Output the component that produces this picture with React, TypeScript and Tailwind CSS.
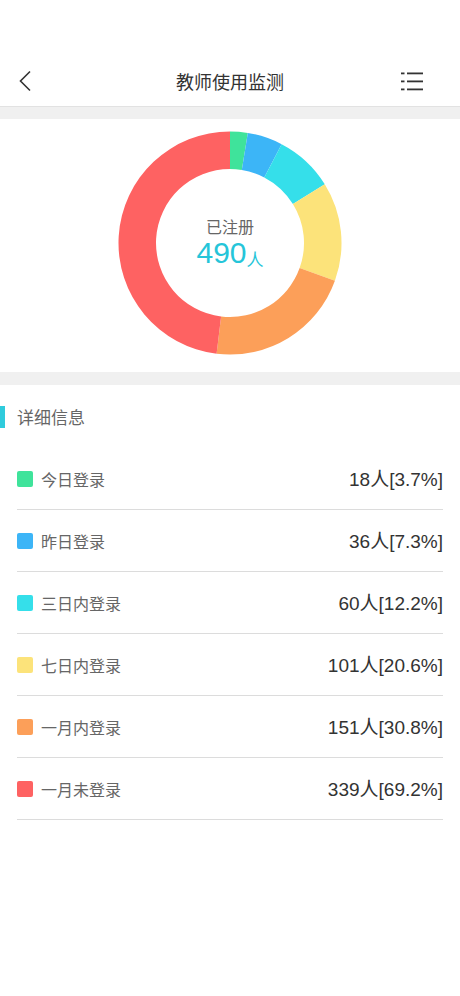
import React from "react";

const items = [
  { label: "今日登录", count: 18, pct: "3.7%", color: "#3fe39b" },
  { label: "昨日登录", count: 36, pct: "7.3%", color: "#3cb5f7" },
  { label: "三日内登录", count: 60, pct: "12.2%", color: "#35dfea" },
  { label: "七日内登录", count: 101, pct: "20.6%", color: "#fce37a" },
  { label: "一月内登录", count: 151, pct: "30.8%", color: "#fc9f59" },
  { label: "一月未登录", count: 339, pct: "69.2%", color: "#fe6262" },
];

const num = '"Liberation Sans", "Noto Sans CJK SC", sans-serif';

function arc(cx: number, cy: number, r: number, r0: number, a0: number, a1: number) {
  const p = (rad: number, a: number) => [cx + rad * Math.sin(a), cy - rad * Math.cos(a)];
  const large = a1 - a0 > Math.PI ? 1 : 0;
  const [x1, y1] = p(r, a0);
  const [x2, y2] = p(r, a1);
  const [x3, y3] = p(r0, a1);
  const [x4, y4] = p(r0, a0);
  return `M${x1} ${y1} A${r} ${r} 0 ${large} 1 ${x2} ${y2} L${x3} ${y3} A${r0} ${r0} 0 ${large} 0 ${x4} ${y4} Z`;
}

function Donut() {
  const total = items.reduce((s, i) => s + i.count, 0);
  let acc = 0;
  return (
    <svg width="226" height="226" viewBox="0 0 226 226">
      {items.map((i) => {
        const a0 = (acc / total) * Math.PI * 2;
        acc += i.count;
        const a1 = (acc / total) * Math.PI * 2;
        return <path key={i.label} d={arc(113, 113, 111.5, 74, a0, a1)} fill={i.color} />;
      })}
    </svg>
  );
}

export default function App() {
  return (
    <div className="w-[460px] min-h-[996px] bg-white" style={{ fontFamily: '"Noto Sans CJK SC", "Noto Sans", sans-serif' }}>
      <div className="h-[56px]" />
      <div className="h-[51px] border-b border-[#e2e2e2] grid grid-cols-[80px_1fr_80px] items-center">
        <div className="pl-[19px]">
          <svg width="14" height="22" viewBox="0 0 14 22" fill="none" stroke="#333" strokeWidth="1.6">
            <path d="M11 1.5 L1.5 11 L11 20.5" />
          </svg>
        </div>
        <div className="text-[18px] text-[#333] text-center">教师使用监测</div>
        <div className="flex justify-end pr-[37px]">
          <svg width="22" height="20" viewBox="0 0 22 20" fill="#333">
            <rect x="0" y="1.5" width="3.5" height="1.8" />
            <rect x="6" y="1.5" width="16" height="1.8" />
            <rect x="0" y="9.5" width="3.5" height="1.8" />
            <rect x="6" y="9.5" width="16" height="1.8" />
            <rect x="0" y="17.5" width="3.5" height="1.8" />
            <rect x="6" y="17.5" width="16" height="1.8" />
          </svg>
        </div>
      </div>
      <div className="h-[12px] bg-[#f0f0f0]" />
      <div className="h-[253px] flex justify-center pt-[11px]">
        <div className="relative w-[226px] h-[226px]">
          <Donut />
          <div className="absolute inset-0 flex flex-col items-center pt-[88px]">
            <div className="text-[16px] text-[#666] leading-none">已注册</div>
            <div className="text-[#25c5d9] leading-none mt-[4px] flex items-end">
              <span className="text-[30px]" style={{ fontFamily: num }}>490</span>
              <span className="text-[17px] mb-[1px]">人</span>
            </div>
          </div>
        </div>
      </div>
      <div className="h-[13px] bg-[#f0f0f0]" />
      <div className="h-[63px] flex items-center">
        <div className="w-[5px] h-[22px] bg-[#2fcbdc]" />
        <div className="ml-[12px] text-[17px] text-[#666]">详细信息</div>
      </div>
      <div className="px-[17px]">
        {items.map((i) => (
          <div key={i.label} className="h-[62px] border-b border-[#dcdcdc] flex items-center justify-between">
            <div className="flex items-center">
              <div className="w-[16px] h-[16px] rounded-[2px]" style={{ backgroundColor: i.color }} />
              <span className="ml-[8px] text-[16px] text-[#666]">{i.label}</span>
            </div>
            <span className="text-[19px] text-[#333] pt-[3px]" style={{ fontFamily: num }}>
              {i.count}人[{i.pct}]
            </span>
          </div>
        ))}
      </div>
    </div>
  );
}
